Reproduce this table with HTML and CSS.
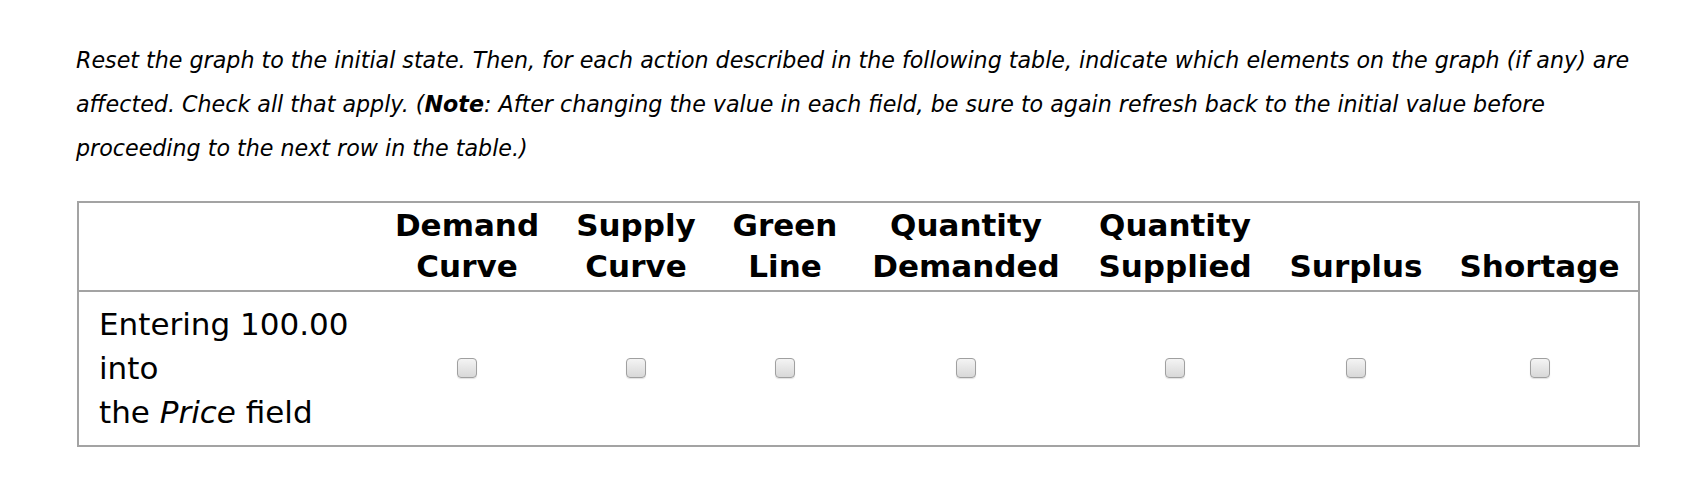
FILE: index.html
```html
<!DOCTYPE html>
<html>
<head>
<meta charset="utf-8">
<link rel="stylesheet" href="styles.css">
</head>
<body>
<div class="page">
  <p class="intro">Reset the graph to the initial state. Then, for each action described in the following table, indicate which elements on the graph (if any) are affected. Check all that apply. (<b>Note</b>: After changing the value in each field, be sure to again refresh back to the initial value before proceeding to the next row in the table.)</p>
  <table class="grid">
    <colgroup>
      <col class="c-lead">
      <col class="c-demand">
      <col class="c-supply">
      <col class="c-green">
      <col class="c-qd">
      <col class="c-qs">
      <col class="c-surplus">
      <col class="c-shortage">
    </colgroup>
    <thead>
      <tr>
        <th></th>
        <th>Demand<br>Curve</th>
        <th>Supply<br>Curve</th>
        <th>Green<br>Line</th>
        <th>Quantity<br>Demanded</th>
        <th>Quantity<br>Supplied</th>
        <th>Surplus</th>
        <th>Shortage</th>
      </tr>
    </thead>
    <tbody>
      <tr>
        <td class="label">Entering 100.00<br>into<br>the <i>Price</i> field</td>
        <td><span class="box"></span></td>
        <td><span class="box"></span></td>
        <td><span class="box"></span></td>
        <td><span class="box"></span></td>
        <td><span class="box"></span></td>
        <td><span class="box"></span></td>
        <td><span class="box"></span></td>
      </tr>
    </tbody>
  </table>
</div>
</body>
</html>
```

FILE: styles.css
```css
html, body {
  margin: 0;
  padding: 0;
  background: #fff;
}
.page {
  padding: 38px 36px 0 76px;
  font-family: "DejaVu Sans", Verdana, sans-serif;
  color: #000;
}
.intro {
  margin: 0;
  font-size: 22.2px;
  font-style: italic;
  line-height: 44px;
}
.intro b {
  font-weight: bold;
}
.grid {
  margin: 31px 0 0 1px;
  width: 1561px;
  table-layout: fixed;
  border-collapse: collapse;
  border: 2px solid #a3a3a3;
}
.c-lead { width: 301px; }
.c-demand { width: 176px; }
.c-supply { width: 162px; }
.c-green { width: 136px; }
.c-qd { width: 226px; }
.c-qs { width: 192px; }
.c-surplus { width: 170px; }
.c-shortage { width: 198px; }
.grid th {
  font-size: 31px;
  font-weight: bold;
  line-height: 41px;
  padding: 2px 0 3px;
  vertical-align: bottom;
  text-align: center;
  white-space: nowrap;
  border-bottom: 2px solid #a3a3a3;
}
.grid td {
  text-align: center;
  vertical-align: middle;
  padding: 10px 0 11px;
}
.grid td.label {
  text-align: left;
  font-size: 31px;
  line-height: 44px;
  padding: 10px 0 11px 20px;
}
.box {
  display: inline-block;
  width: 18px;
  height: 18px;
  border: 1px solid #a0a0a0;
  border-radius: 4px;
  background: linear-gradient(#f4f4f4, #d8d8d8);
  box-shadow: 0 1px 1px rgba(0,0,0,0.12);
  vertical-align: middle;
}
```
